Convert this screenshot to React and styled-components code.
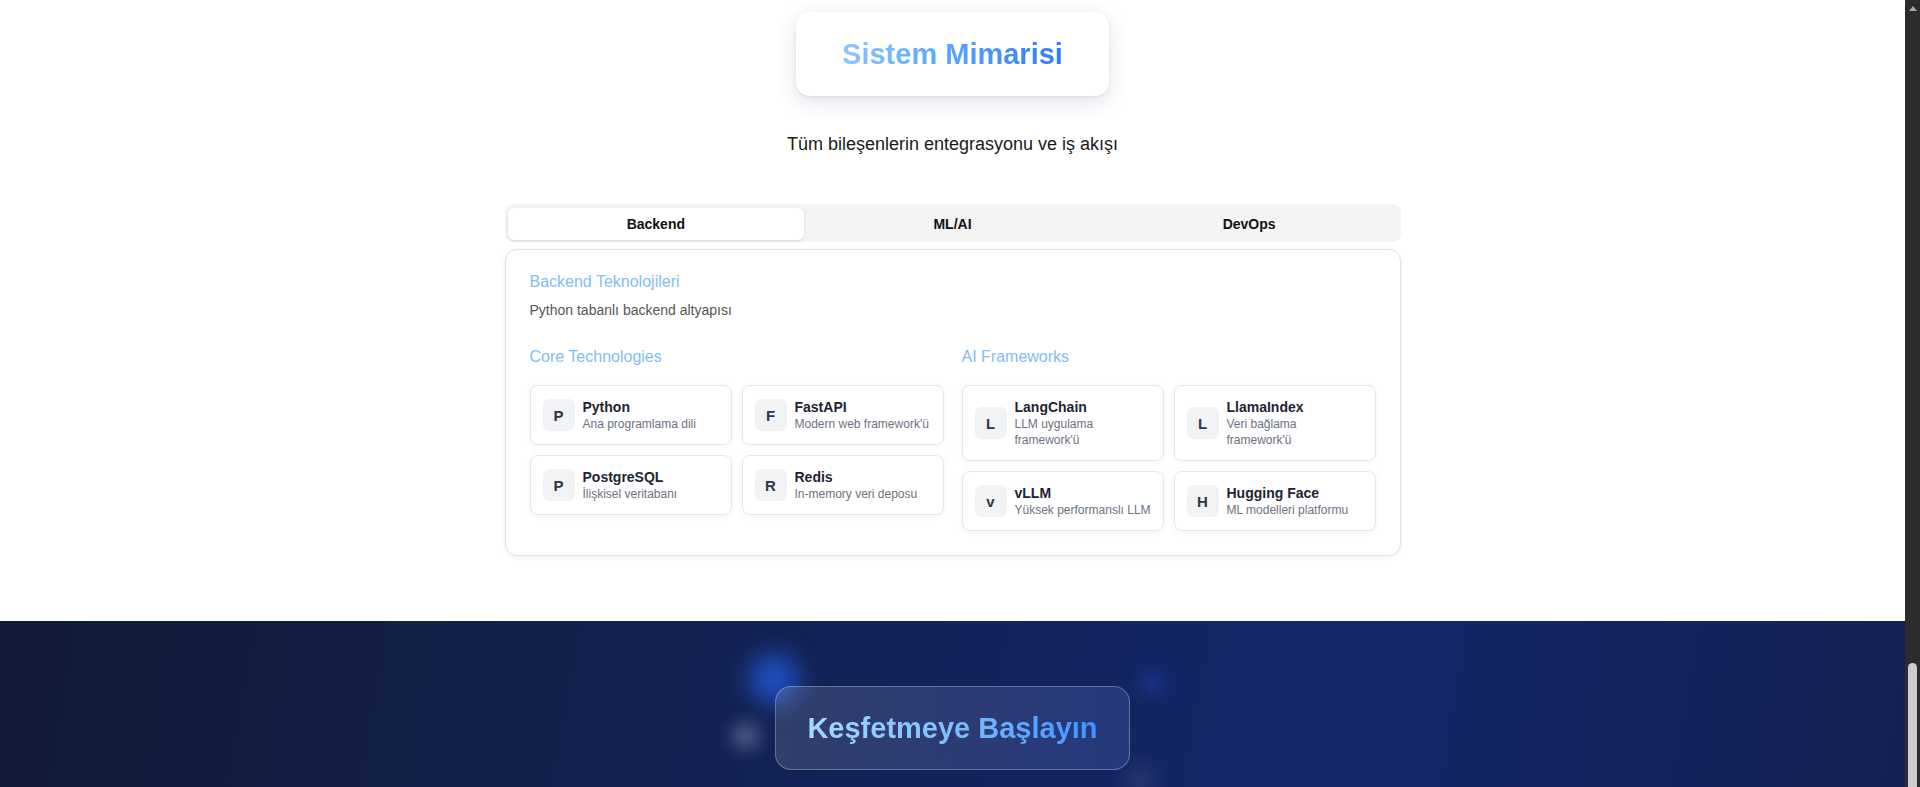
import styled, { createGlobalStyle } from 'styled-components';

const GlobalStyle = createGlobalStyle`
  * { box-sizing: border-box; }
  html, body {
    margin: 0;
    padding: 0;
    height: 100%;
    overflow: hidden;
  }
  body {
    font-family: 'Liberation Sans', Arial, sans-serif;
    background: #ffffff;
    color: #1a1a1a;
  }
  #root { height: 100%; }
`;

const Shell = styled.div`
  display: flex;
  height: 100vh;
`;

const Page = styled.main`
  flex: 1;
  min-width: 0;
  display: flex;
  flex-direction: column;
`;

// ---------- architecture section ----------
const ArchSection = styled.section`
  height: 621px;
  padding-top: 12px;
  display: flex;
  flex-direction: column;
  align-items: center;
`;

const TitleCard = styled.div`
  background: #ffffff;
  border-radius: 14px;
  padding: 24px 46px;
  box-shadow: 0 6px 20px rgba(40, 50, 110, 0.14), 0 1px 3px rgba(0, 0, 0, 0.08);
`;

const GradientText = styled.h2`
  margin: 0;
  font-size: ${p => p.$size || 29}px;
  line-height: 36px;
  font-weight: 700;
  white-space: nowrap;
  background: ${p => p.$gradient};
  -webkit-background-clip: text;
  background-clip: text;
  color: transparent;
`;

const Subtitle = styled.p`
  margin: 34px 0 0;
  font-size: 18px;
  line-height: 28px;
  color: #1a1a1a;
`;

const Container = styled.div`
  width: 896px;
  margin-top: 46px;
`;

const TabList = styled.div`
  display: grid;
  grid-template-columns: repeat(3, 1fr);
  height: 38px;
  padding: 4px 3px;
  background: #f4f4f5;
  border-radius: 8px;
`;

const Tab = styled.button`
  border: 0;
  font-family: inherit;
  font-size: 14px;
  font-weight: 700;
  line-height: 30px;
  color: #111111;
  text-align: center;
  border-radius: 6px;
  cursor: pointer;
  background: ${p => (p.$active ? '#ffffff' : 'transparent')};
  box-shadow: ${p => (p.$active ? '0 1px 3px rgba(0,0,0,0.12)' : 'none')};
`;

const Panel = styled.div`
  margin-top: 7px;
  border: 1px solid #e2e2e5;
  border-radius: 12px;
  padding: 20px 24px 24px;
  background: #ffffff;
  box-shadow: 0 1px 5px rgba(0, 0, 0, 0.06);
`;

const PanelTitle = styled.h3`
  margin: 0;
  font-size: 16px;
  line-height: 24px;
  font-weight: 400;
  color: #82bdf8;
`;

const PanelDesc = styled.p`
  margin: 6px 0 0;
  font-size: 14px;
  line-height: 20px;
  color: #555555;
`;

const Columns = styled.div`
  margin-top: 25px;
  display: grid;
  grid-template-columns: 1fr 1fr;
  gap: 18px;
`;

const GroupTitle = styled.h4`
  margin: 0 0 16px;
  font-size: 16px;
  line-height: 24px;
  font-weight: 400;
  color: #82bdf8;
`;

const ItemGrid = styled.div`
  display: grid;
  grid-template-columns: 1fr 1fr;
  gap: 10px;
`;

const Item = styled.div`
  display: flex;
  align-items: center;
  gap: 8px;
  padding: 12px 11px 12px 12px;
  min-height: 60px;
  border: 1px solid #e6e7ea;
  border-radius: 8px;
  background: #ffffff;
  box-shadow: 0 1px 6px rgba(0, 0, 0, 0.05);
`;

const Badge = styled.div`
  flex-shrink: 0;
  width: 32px;
  height: 32px;
  border-radius: 6px;
  background: #f2f3f5;
  display: flex;
  align-items: center;
  justify-content: center;
  font-size: 15px;
  font-weight: 700;
  color: #2f3747;
`;

const ItemText = styled.div`
  min-width: 0;
  display: flex;
  flex-direction: column;
`;

const ItemName = styled.span`
  font-size: 14px;
  line-height: 18px;
  font-weight: 700;
  color: #1d2433;
`;

const ItemDesc = styled.span`
  font-size: 12px;
  line-height: 16px;
  color: #6b7280;
`;

// ---------- call to action ----------
const CtaSection = styled.section`
  position: relative;
  flex: 1;
  overflow: hidden;
  display: flex;
  justify-content: center;
  padding-top: 65px;
  background: linear-gradient(100deg, #101a36 0%, #132254 40%, #13266a 70%, #142152 100%);
`;

const Glow = styled.span`
  position: absolute;
  left: ${p => p.$x}px;
  top: ${p => p.$y}px;
  width: ${p => p.$size}px;
  height: ${p => p.$size}px;
  border-radius: 50%;
  transform: translate(-50%, -50%);
  background: ${p => p.$color};
  filter: blur(${p => p.$blur}px);
`;

const CtaButton = styled.button`
  position: relative;
  align-self: flex-start;
  padding: 23px 31px;
  border-radius: 16px;
  border: 1px solid rgba(255, 255, 255, 0.28);
  background: linear-gradient(90deg, rgba(255, 255, 255, 0.13), rgba(130, 160, 255, 0.17));
  cursor: pointer;
`;

// ---------- window scrollbar ----------
const ScrollRail = styled.div`
  width: 15px;
  height: 100vh;
  flex-shrink: 0;
  background: #2c2c2c;
  display: flex;
  flex-direction: column;
  align-items: center;
`;

const ScrollArrow = styled.span`
  margin-top: 6px;
  width: 0;
  height: 0;
  border-left: 4.5px solid transparent;
  border-right: 4.5px solid transparent;
  border-bottom: 5px solid #a8a8a8;
`;

const ScrollThumb = styled.span`
  margin-top: auto;
  width: 9px;
  height: 124px;
  border-radius: 5px 5px 0 0;
  background: #cdcdcd;
`;

const coreTech = [
  { letter: 'P', name: 'Python', desc: 'Ana programlama dili' },
  { letter: 'F', name: 'FastAPI', desc: "Modern web framework'ü" },
  { letter: 'P', name: 'PostgreSQL', desc: 'İlişkisel veritabanı' },
  { letter: 'R', name: 'Redis', desc: 'In-memory veri deposu' },
];

const aiFrameworks = [
  { letter: 'L', name: 'LangChain', desc: "LLM uygulama framework'ü" },
  { letter: 'L', name: 'LlamaIndex', desc: "Veri bağlama framework'ü" },
  { letter: 'v', name: 'vLLM', desc: 'Yüksek performanslı LLM' },
  { letter: 'H', name: 'Hugging Face', desc: 'ML modelleri platformu' },
];

const tabs = ['Backend', 'ML/AI', 'DevOps'];

const TechGroup = ({ title, items }) => (
  <div>
    <GroupTitle>{title}</GroupTitle>
    <ItemGrid>
      {items.map(item => (
        <Item key={item.name}>
          <Badge>{item.letter}</Badge>
          <ItemText>
            <ItemName>{item.name}</ItemName>
            <ItemDesc>{item.desc}</ItemDesc>
          </ItemText>
        </Item>
      ))}
    </ItemGrid>
  </div>
);

export default function App() {
  return (
    <>
      <GlobalStyle />
      <Shell>
        <Page>
          <ArchSection>
            <TitleCard>
              <GradientText $gradient="linear-gradient(90deg, #8ec5ff 0%, #5aa6ff 45%, #2b7bff 100%)">
                Sistem Mimarisi
              </GradientText>
            </TitleCard>
            <Subtitle>Tüm bileşenlerin entegrasyonu ve iş akışı</Subtitle>

            <Container>
              <TabList>
                {tabs.map((t, i) => (
                  <Tab key={t} $active={i === 0}>{t}</Tab>
                ))}
              </TabList>

              <Panel>
                <PanelTitle>Backend Teknolojileri</PanelTitle>
                <PanelDesc>Python tabanlı backend altyapısı</PanelDesc>
                <Columns>
                  <TechGroup title="Core Technologies" items={coreTech} />
                  <TechGroup title="AI Frameworks" items={aiFrameworks} />
                </Columns>
              </Panel>
            </Container>
          </ArchSection>

          <CtaSection>
            <Glow $x={774} $y={58} $size={50} $color="rgba(37, 99, 235, 0.7)" $blur={12} />
            <Glow $x={746} $y={115} $size={28} $color="rgba(200, 210, 235, 0.3)" $blur={8} />
            <Glow $x={1152} $y={62} $size={22} $color="rgba(40, 80, 210, 0.4)" $blur={8} />
            <Glow $x={1140} $y={160} $size={30} $color="rgba(200, 205, 230, 0.12)" $blur={10} />
            <CtaButton>
              <GradientText $gradient="linear-gradient(90deg, #a8d9ff 0%, #7cbfff 50%, #3d92ff 100%)">
                Keşfetmeye Başlayın
              </GradientText>
            </CtaButton>
          </CtaSection>
        </Page>

        <ScrollRail>
          <ScrollArrow />
          <ScrollThumb />
        </ScrollRail>
      </Shell>
    </>
  );
}
